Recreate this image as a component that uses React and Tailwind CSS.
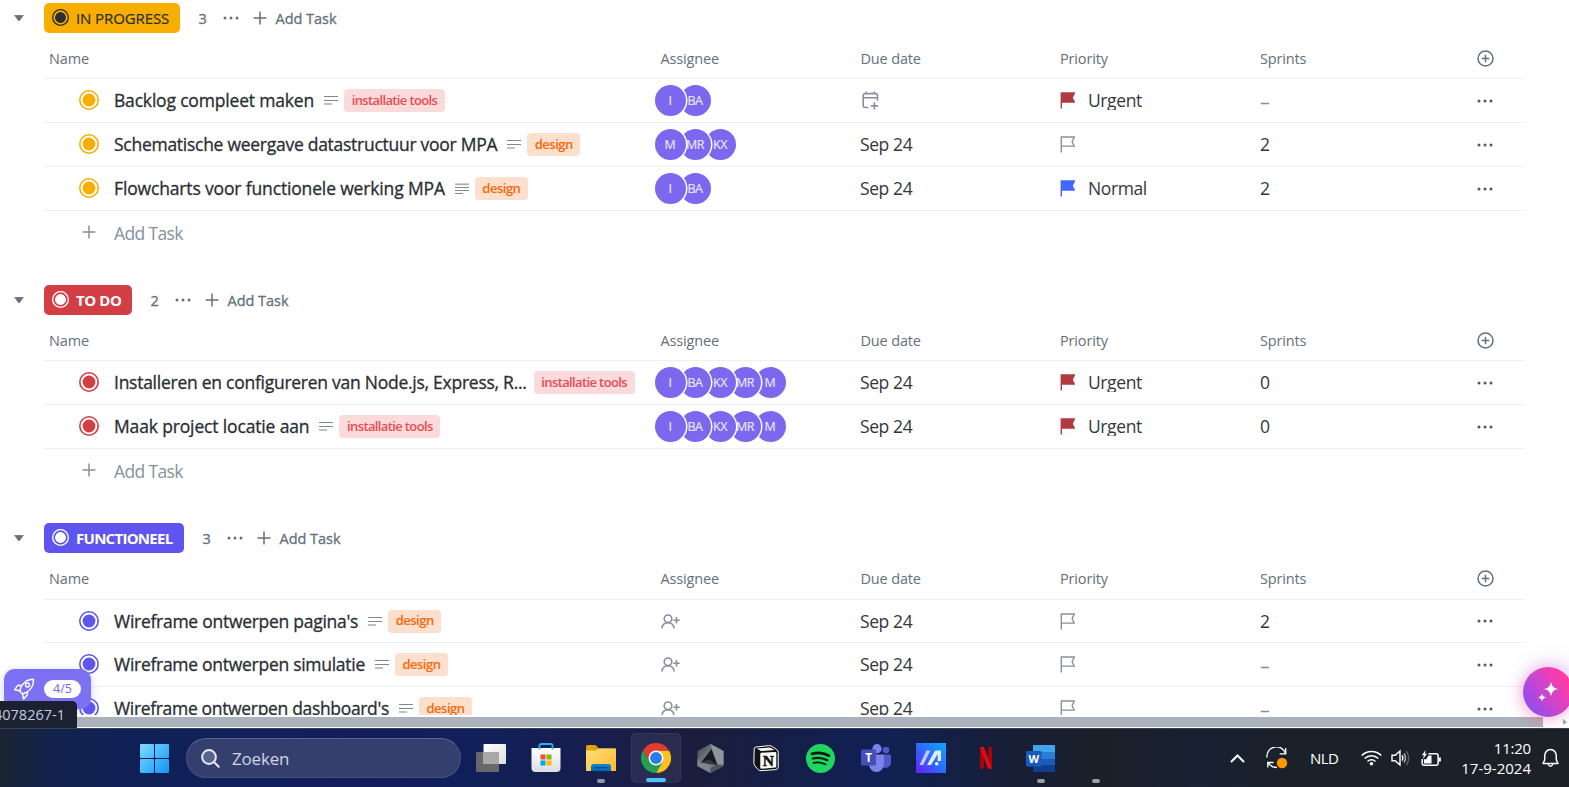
import React from "react";

const AMBER = "#f8ae00";
const RED = "#d33d44";
const INDIGO = "#5f55ee";

const sections = [
  {
    title: "IN PROGRESS", count: 3, color: AMBER, badge: "bg-[#f8ae00] text-[#2a2e34] w-[136px]", mark: "#2a2e34",
    titleClass: "font-normal tracking-[-0.1px] [-webkit-text-stroke:0.2px]", headClass: "h-[41px]", addRow: true,
    tasks: [
      { name: "Backlog compleet maken", track: "tracking-[-0.18px]", tag: "tools", people: ["I", "BA"], due: null, prio: "Urgent", sprint: "–" },
      { name: "Schematische weergave datastructuur voor MPA", track: "tracking-[-0.27px]", tag: "design", people: ["M", "MR", "KX"], due: "Sep 24", prio: null, sprint: "2" },
      { name: "Flowcharts voor functionele werking MPA", track: "tracking-[-0.15px]", tag: "design", dense: true, people: ["I", "BA"], due: "Sep 24", prio: "Normal", sprint: "2" },
    ],
  },
  {
    title: "TO DO", count: 2, color: RED, badge: "bg-[#d33d44] text-white w-[88px]", mark: "#fff",
    titleClass: "font-bold tracking-[-0.4px]", headClass: "h-[41px]", addRow: true,
    tasks: [
      { name: "Installeren en configureren van Node.js, Express, R...", track: "tracking-[-0.26px]", noDesc: true, tag: "tools", people: ["I", "BA", "KX", "MR", "M"], due: "Sep 24", prio: "Urgent", sprint: "0" },
      { name: "Maak project locatie aan", track: "tracking-[-0.15px]", tag: "tools", people: ["I", "BA", "KX", "MR", "M"], due: "Sep 24", prio: "Urgent", sprint: "0" },
    ],
  },
  {
    title: "FUNCTIONEEL", count: 3, color: INDIGO, badge: "bg-[#5f55ee] text-white w-[140px]", mark: "#fff",
    titleClass: "font-bold tracking-[-0.72px]", headClass: "h-[42px] pb-px", addRow: false,
    tasks: [
      { name: "Wireframe ontwerpen pagina's", track: "tracking-[-0.27px]", tag: "design", people: [], due: "Sep 24", prio: null, sprint: "2", short: true },
      { name: "Wireframe ontwerpen simulatie", track: "tracking-[-0.28px]", tag: "design", people: [], due: "Sep 24", prio: null, sprint: "–" },
      { name: "Wireframe ontwerpen dashboard's", track: "tracking-[-0.33px]", tag: "design", people: [], due: "Sep 24", prio: null, sprint: "–" },
    ],
  },
];

function Target({ color, size = 20, gap = "#fff" }) {
  return (
    <svg width={size} height={size} viewBox="0 0 20 20" className="-mt-px shrink-0">
      <circle cx="10" cy="10" r="9.2" fill={gap} stroke={color} strokeWidth="1.6" />
      <circle cx="10" cy="10" r="6.4" fill={color} />
    </svg>
  );
}

function Plus({ className, size = 14 }) {
  return (
    <svg width={size} height={size} viewBox="0 0 14 14" className={className} stroke="currentColor" strokeWidth="1.5" fill="none">
      <path d="M7 .5v13M.5 7h13" />
    </svg>
  );
}

function Dots({ className }) {
  return (
    <svg width="16" height="4" viewBox="0 0 16 4" className={className} fill="currentColor">
      <circle cx="2" cy="2" r="1.5" /><circle cx="8" cy="2" r="1.5" /><circle cx="14" cy="2" r="1.5" />
    </svg>
  );
}

function DescIcon({ dense }) {
  return (
    <svg width="14" height="11" viewBox="0 0 14 11" className="shrink-0" fill="none" stroke="#7f8795">
      {dense ? (
        <>
          <path d="M0 4.500h14M0 7.500h14M0 10.500h8" />
          <path d="M0 1.300h14" strokeWidth="1.800" stroke="#a9afba" />
        </>
      ) : (
        <>
          <path d="M0 1.500h14M0 5.500h14" />
          <path d="M0 9h8" strokeWidth="1.800" stroke="#b4b9c3" />
        </>
      )}
    </svg>
  );
}

function Flag({ kind }) {
  const fill = kind === "Urgent" ? "#b13a41" : kind === "Normal" ? "#4466ff" : "none";
  const stroke = kind ? fill : "#87909e";
  return (
    <svg width="15" height="17" viewBox="0 0 15 17" className="shrink-0" fill={fill} stroke={stroke} strokeWidth="1.4">
      <path d="M1.300 16.500V1h13L12.100 5.700l2.200 4.400H1.300" />
    </svg>
  );
}

function CalendarPlus() {
  return (
    <svg width="17" height="19" viewBox="0 0 17 19" className="ml-[2px]" fill="none" stroke="#87909e" strokeWidth="1.600">
      <path d="M4.2 .5v3M12.300 .5v3M1.200 6.700h14.300M6.500 16.500H3.200a2 2 0 0 1-2-2V4.600a2 2 0 0 1 2-2h10.300a2 2 0 0 1 2 2v5.200M12.400 11.300v7.200M8.800 14.900h7.200" />
    </svg>
  );
}

function UserPlus() {
  return (
    <svg width="19" height="15" viewBox="0 0 19 15" className="ml-[1px]" fill="none" stroke="#87909e" strokeWidth="1.600">
      <circle cx="7" cy="4.8" r="3.8" />
      <path d="M1 14.500c.2-3.600 2.600-5.800 6-5.800s5.800 2.200 6 5.800M15.500 3v6.400M12.300 6.200h6.400" />
    </svg>
  );
}

function Avatars({ people }) {
  if (!people.length) return <div className="pl-[5px]"><UserPlus /></div>;
  return (
    <div className="isolate flex">
      {people.map((p, i) => (
        <div
          key={i}
          style={{ zIndex: 10 - i }}
          className="relative -mr-[6px] flex h-[31px] w-[31px] shrink-0 items-center justify-center rounded-full bg-[#7b68ee] pr-[1px] pt-px text-[12.5px] tracking-[-0.4px] text-[#e8e4ff] ring-[1.5px] ring-white [-webkit-text-stroke:0.2px]"
        >
          {p}
        </div>
      ))}
    </div>
  );
}

function Tag({ kind }) {
  return kind === "tools" ? (
    <span className="flex h-[23px] w-[101px] shrink-0 items-center justify-center rounded-[4px] bg-[#fbdadb] text-[13px] font-semibold tracking-[-0.63px] text-[#ea4b52]">installatie tools</span>
  ) : (
    <span className="flex h-[23px] w-[53px] shrink-0 items-center justify-center rounded-[4px] bg-[#fddfcd] text-[13px] font-semibold tracking-[-0.500px] text-[#f76808]">design</span>
  );
}

const grid = "grid grid-cols-[611px_200px_200px_200px_200px_1fr] items-center border-b border-[#eeeff1]";

function TaskRow({ task, color }) {
  return (
    <div className={`${grid} ${task.short ? "h-[43px]" : "h-[44px]"} text-[17.5px] tracking-[-0.4px] text-[#33373d]`}>
      <div className="flex items-center pl-[35px]">
        <Target color={color} />
        <span className={`ml-[15px] whitespace-nowrap text-[17.5px] text-[#2a2e34] [-webkit-text-stroke:0.3px] ${task.track}`}>{task.name}</span>
        <div className={`flex items-center gap-[6px] ${task.noDesc ? "ml-[7px]" : "ml-[10px]"}`}>
          {!task.noDesc && <DescIcon dense={task.dense} />}
          <Tag kind={task.tag} />
        </div>
      </div>
      <Avatars people={task.people} />
      <div className="pl-[5px]">{task.due || <CalendarPlus />}</div>
      <div className="flex h-[25px] items-start gap-[13px] pl-[5px]">
        <div className="pt-[4px]"><Flag kind={task.prio} /></div>
        {task.prio && <span className="h-[22px] overflow-hidden leading-[25px]">{task.prio}</span>}
      </div>
      <div className="pl-[5px]">
        {task.sprint === "–" ? <span className="block pt-[2px] text-[19.500px] leading-[24px] text-[#87909e]">–</span> : task.sprint}
      </div>
      <Dots className="ml-[22px] text-[#4f5762]" />
    </div>
  );
}

function Section({ s }) {
  return (
    <section className="flex flex-col">
      <div className="flex h-[30px] items-center">
        <svg width="10" height="6" viewBox="0 0 10 6" className="ml-[14px] mr-[20px]"><path d="M.6.300h8.800L5.700 5.400a1 1 0 0 1-1.400 0z" fill="#656f7d" stroke="#656f7d" strokeWidth=".6" /></svg>
        <div className={`flex h-[30px] items-center gap-[7.500px] rounded-[5px] pl-[7.5px] ${s.badge}`}>
          <Target color={s.mark} size={17} gap={s.color} />
          <span className={`whitespace-nowrap pt-px text-[15px] ${s.titleClass}`}>{s.title}</span>
        </div>
        <div className="flex items-center text-[14.5px] text-[#656f7d] [-webkit-text-stroke:0.3px]">
          <span className="ml-[18.500px] w-[9px] pt-[2px]">{s.count}</span>
          <Dots className="ml-[15.500px]" />
          <Plus className="ml-[14px]" />
          <span className="ml-[8.500px] pt-[2px] tracking-[-0.02px]">Add Task</span>
        </div>
      </div>
      <div className="ml-[44px] w-[1481px]">
        <div className={`${grid} ${s.headClass} mt-[5px] text-[14.5px] tracking-[-0.15px] text-[#656f7d]`}>
          <span className="pl-[5px] pt-[2px]">Name</span>
          <span className="pl-[5.500px] pt-[2px]">Assignee</span>
          <span className="pl-[5.500px] pt-[2px]">Due date</span>
          <span className="pl-[5px] pt-[2px]">Priority</span>
          <span className="pl-[5px] pt-[2px]">Sprints</span>
          <svg width="17" height="17" viewBox="0 0 17 17" className="ml-[21.500px]" fill="none" stroke="#656f7d" strokeWidth="1.5"><circle cx="8.500" cy="8.500" r="7.500" /><path d="M8.500 4.700v7.600M4.700 8.500h7.600" /></svg>
        </div>
        {s.tasks.map((t) => <TaskRow key={t.name} task={t} color={s.color} />)}
      </div>
      {s.addRow && (
        <div className="flex h-[74px] items-start pl-[82px] pt-[9px] text-[#87909e]">
          <Plus className="mt-[5px]" />
          <span className="ml-[18px] text-[17.5px] leading-[26px] tracking-[-0.65px]">Add Task</span>
        </div>
      )}
    </section>
  );
}

/* ---------- taskbar icons ---------- */

const WinLogo = () => (
  <svg width="29" height="29" viewBox="0 0 29 29">
    <defs><linearGradient id="win" gradientUnits="userSpaceOnUse" x1="0" y1="0" x2="29" y2="29"><stop stopColor="#7fdcfb" /><stop offset="1" stopColor="#0f95fb" /></linearGradient></defs>
    <g fill="url(#win)"><rect width="14" height="14" rx="1" /><rect x="15" width="14" height="14" rx="1" /><rect y="15" width="14" height="14" rx="1" /><rect x="15" y="15" width="14" height="14" rx="1" /></g>
  </svg>
);

const TaskView = () => (
  <svg width="30" height="28" viewBox="0 0 30 28">
    <defs><linearGradient id="tv" x1="0" y1="0" x2="1" y2="1"><stop stopColor="#fff" /><stop offset="1" stopColor="#dedede" /></linearGradient></defs>
    <rect y="8" width="23" height="20" rx="1" fill="#686868" />
    <rect x="7.500" width="22.500" height="20" rx="1" fill="url(#tv)" />
    <path d="M7.500 8H23v12H7.500z" fill="#a9a9a9" />
  </svg>
);

const Store = () => (
  <svg width="30" height="30" viewBox="0 0 30 30">
    <defs><linearGradient id="st" x1="0" y1="0" x2="0" y2="1"><stop stopColor="#fff" /><stop offset="1" stopColor="#dcdde2" /></linearGradient></defs>
    <path d="M.5 5h29v20a4 4 0 0 1-4 4h-21a4 4 0 0 1-4-4z" fill="url(#st)" />
    <path d="M8.500 6.500V2.500a1.500 1.500 0 0 1 1.500-1.500h10a1.500 1.500 0 0 1 1.500 1.500v4" fill="none" stroke="#2bb1ef" strokeWidth="1.800" />
    <path d="M9.500 11.500H14.500V16.500H9.500z" fill="#f25022" /><path d="M15.500 11.500H20.500V16.500H15.500z" fill="#7fba00" />
    <path d="M9.500 17.500H14.500V22.500H9.500z" fill="#00a4ef" /><path d="M15.500 17.500H20.500V22.500H15.500z" fill="#ffb900" />
  </svg>
);

const Folder = () => (
  <svg width="30" height="27" viewBox="0 0 30 27">
    <defs>
      <linearGradient id="fo" x1="0" y1="0" x2="1" y2="1"><stop stopColor="#ffdf7d" /><stop offset="1" stopColor="#fbbc2a" /></linearGradient>
      <linearGradient id="fb" x1="0" y1="0" x2="0" y2="1"><stop stopColor="#0f87d8" /><stop offset="1" stopColor="#0a62b4" /></linearGradient>
    </defs>
    <path d="M0 1.500A1.500 1.500 0 0 1 1.500 0h8L13 3.500H28.500A1.500 1.500 0 0 1 30 5v5H0z" fill="#dfa000" />
    <path d="M0 5.500h10L13 3.500h17V26H0z" fill="url(#fo)" />
    <path d="M5 26v-4.500A2.500 2.500 0 0 1 7.500 19h15A2.500 2.500 0 0 1 25 21.500V26z" fill="url(#fb)" />
    <path d="M8.500 22.600h13" stroke="#064a8c" strokeWidth="1.200" />
  </svg>
);

const Chrome = () => (
  <svg width="30" height="30" viewBox="0 0 48 48">
    <path d="M24 12h20.800A24 24 0 0 1 24 48L34.400 30z" fill="#fcc31e" />
    <path d="M13.600 30 3.200 12A24 24 0 0 0 24 48l10.400-18z" fill="#23a050" />
    <path d="M24 12H44.800A24 24 0 0 0 3.200 12l10.400 18z" fill="#e33b2e" />
    <circle cx="24" cy="24" r="12" fill="#fff" /><circle cx="24" cy="24" r="9.500" fill="#2a7de9" />
  </svg>
);

const Armoury = () => (
  <svg width="27" height="29" viewBox="0 0 27 29">
    <defs><linearGradient id="ar" x1="0" y1="0" x2="1" y2="1"><stop stopColor="#3c444b" /><stop offset=".5" stopColor="#7f888e" /><stop offset="1" stopColor="#5b646b" /></linearGradient></defs>
    <path d="M13.500 0 26.500 7v15l-13 7L.5 22V7z" fill="url(#ar)" />
    <path d="M13.500 0 26.500 7v14l-5.500-1-6-15z" fill="#8d969c" />
    <path d="M.5 15v7l13 7V24L5 20z" fill="#7d868d" />
    <path d="M13.500 29l13-7-6-1.500-7 3.500z" fill="#4b535a" />
    <path d="M14.500 5 4 18.500l8-2.500 8.500 5.500z" fill="#161a21" />
    <path d="M4 18.500 12 16l8.500 5.500z" fill="#30373e" />
  </svg>
);

const Notion = () => (
  <svg width="26" height="27" viewBox="0 0 26 27">
    <path d="M1.200 4Q1 2.300 3 2L15.500.7Q18 .500 19.500 1.700L24 4.800q1.200 1 1.200 2.500v14.500q0 2.500-2.500 2.800L8 25.700q-2 0-3-1.200L1.800 20.700Q.9 19.500.9 17.500z" fill="#111" stroke="#fff" strokeWidth="1" />
    <path d="M3.800 3.600 16.300 2.500q1-.1 1.800.5L21.300 5 8 6.100z" fill="#fff" />
    <path d="M7.300 9q0-1.200 1.200-1.300L22 6.900q1.300 0 1.300 1.300v13q0 1.300-1.200 1.400L8.700 23.700q-1.400 0-1.400-1.300z" fill="#fff" />
    <text x="15.400" y="20.500" textAnchor="middle" fontFamily="Liberation Serif, serif" fontWeight="700" fontSize="15.500" fill="#111" stroke="#111" strokeWidth=".5">N</text>
  </svg>
);

const Spotify = () => (
  <svg width="29" height="29" viewBox="0 0 29 29">
    <circle cx="14.500" cy="14.500" r="14.500" fill="#1ed760" />
    <g fill="none" stroke="#0c1a12" strokeLinecap="round"><path d="M6 9.900c5.500-1.500 12-1 17 1.800" strokeWidth="2.700" /><path d="M6.800 14.500c5-1.300 10-.7 14.500 1.700" strokeWidth="2.200" /><path d="M7.500 18.800c4-.9 8-.5 12 1.600" strokeWidth="1.800" /></g>
  </svg>
);

const Teams = () => (
  <svg width="30" height="28" viewBox="0 0 30 28">
    <circle cx="25" cy="6" r="3.300" fill="#5059c9" /><path d="M20 10.500h8.500A1.500 1.500 0 0 1 30 12v6.500a5.500 5.500 0 0 1-8 4.800z" fill="#5059c9" />
    <circle cx="16" cy="4.700" r="4.600" fill="#7b83eb" /><path d="M9 10.500h12.500A1.500 1.500 0 0 1 23 12v8.500a7.500 7.500 0 0 1-15 0z" fill="#7b83eb" />
    <rect y="5.500" width="15" height="16" rx="1.300" fill="#464eb8" />
    <text x="7.500" y="17.600" textAnchor="middle" fontFamily="Open Sans, sans-serif" fontWeight="700" fontSize="11.500" fill="#fff">T</text>
  </svg>
);

const MyAsus = () => (
  <svg width="30" height="30" viewBox="0 0 30 30">
    <defs><linearGradient id="ma" x1="0" y1="1" x2="1" y2="0"><stop stopColor="#6a1cff" /><stop offset=".5" stopColor="#2c6bff" /><stop offset="1" stopColor="#0fa8ff" /></linearGradient></defs>
    <rect width="30" height="30" fill="url(#ma)" />
    <path d="M3.500 22 10.500 7.500h3.800L7.200 22z" fill="#bccbff" />
    <path d="M11 22 18.500 8.500Q19.200 7.500 20.500 7.500H25V18h-3.300V11L15 22z" fill="#e4ebff" />
    <circle cx="20.700" cy="20.700" r="1.700" fill="#fff" />
  </svg>
);

const Netflix = () => (
  <svg width="12" height="22" viewBox="0 0 12 22">
    <path d="M0 0h4v21.500L0 22z" fill="#a5060e" /><path d="M8 0h4v22l-4-.5z" fill="#a5060e" /><path d="M0 0h4l8 22-4.200-.5z" fill="#e50914" />
  </svg>
);

const Word = () => (
  <svg width="29" height="27" viewBox="0 0 29 27" className="mr-[1px]">
    <path d="M7 0h21a1 1 0 0 1 1 1v6H7z" fill="#41a5ee" /><path d="M7 7h22v7H7z" fill="#2b7cd3" /><path d="M7 14h22v6.500H7z" fill="#185abd" /><path d="M7 20.500h22V26a1 1 0 0 1-1 1H8a1 1 0 0 1-1-1z" fill="#103f91" />
    <rect y="6" width="15.500" height="15.500" rx="1.300" fill="#185abd" />
    <text x="7.700" y="17.800" textAnchor="middle" fontFamily="Open Sans, sans-serif" fontWeight="700" fontSize="11" fill="#fff">W</text>
  </svg>
);

const apps = [
  { Icon: TaskView }, { Icon: Store }, { Icon: Folder, mark: "bg-[#8f96ad] w-[8px]" },
  { Icon: Chrome, mark: "bg-[#4cc2ff] w-[20px]", active: true }, { Icon: Armoury }, { Icon: Notion }, { Icon: Spotify },
  { Icon: Teams }, { Icon: MyAsus }, { Icon: Netflix }, { Icon: Word, mark: "bg-[#9a9da6] w-[8px]" },
  { mark: "bg-[#9a9da6] w-[8px]" },
];

function Taskbar() {
  return (
    <footer className="flex h-[59px] items-center border-t border-[#3a4157] bg-[linear-gradient(90deg,#1a2433_0px,#12224c_50px,#0f2056_130px,#11205c_260px,#141c5e_330px,#10205a_480px,#191d4a_620px,#1b1d3c_700px,#111f52_850px,#102152_900px,#171e38_1000px,#1b1f29_1100px,#182132_1200px,#1b2129_1300px,#1c2128_1569px)] text-white">
      <div className="ml-[140px]"><WinLogo /></div>
      <div className="ml-[17px] flex h-[40px] w-[275px] items-center rounded-full border border-white/10 border-t-white/20 bg-[#343f6d] pl-[14px]">
        <svg width="19" height="19" viewBox="0 0 19 19" fill="none" stroke="#e8eaf3" strokeWidth="2" strokeLinecap="round"><circle cx="8" cy="8" r="6.900" fill="#59638c" /><path d="m13.200 13.200 4.500 4.500" /></svg>
        <span className="ml-[12px] pt-[2px] text-[17px] tracking-[-0.2px] text-[#d0d4e4]">Zoeken</span>
      </div>
      <div className="ml-[2px] flex">
        {apps.map(({ Icon, mark, active }, i) => (
          <div key={i} className="flex h-[58px] w-[55px] items-center justify-center">
            <div className={`relative flex h-[50px] w-[50px] items-center justify-center rounded-[5px] ${active ? "border border-white/5 bg-white/7" : ""}`}>
              {Icon && <Icon />}
              {mark && <span className={`absolute bottom-0 h-[4px] rounded-full ${mark}`} />}
            </div>
          </div>
        ))}
      </div>
      <div className="ml-auto flex items-center">
        <svg width="15" height="9" viewBox="0 0 15 9" fill="none" stroke="#fff" strokeWidth="2" className="mr-[21px]"><path d="m1 8 6.500-6.500L14 8" /></svg>
        <svg width="22" height="22" viewBox="0 0 22 22" fill="none" stroke="#fff" strokeWidth="1.300" className="mr-[22.500px]">
          <path d="M1 10.500A9.500 9.500 0 0 1 19.500 6.500M19.700 1v5.800h-6M7.500 15.500H1.800v5M2 15.700Q5 20.500 11 20.500" />
          <circle cx="16" cy="16" r="5.200" fill="#ff9800" stroke="none" />
        </svg>
        <span className="mr-[22px] w-[29px] pt-px text-[15px] tracking-[-0.5px]">NLD</span>
        <svg width="21" height="16" viewBox="0 0 21 16" fill="none" stroke="#fff" strokeWidth="1.400" className="mr-[9px]">
          <path d="M.7 5.500a14 14 0 0 1 19.600 0M3.600 8.500a10 10 0 0 1 13.800 0M6.500 11.400a5.800 5.800 0 0 1 8 0" /><circle cx="10.500" cy="13.700" r="1.800" fill="#fff" stroke="none" />
        </svg>
        <svg width="21" height="18" viewBox="0 0 21 18" fill="none" stroke="#fff" strokeWidth="1.400" className="mr-[9px]">
          <path d="M1 6.200h3.200L9 2v14L4.200 11.800H1zM11 6.500q1.700 2.500 0 5" /><path d="M13 4.500q3 4.500 0 9" stroke="#b5b8bd" /><path d="M15.300 2q4.800 7 0 14" stroke="#5b6068" />
        </svg>
        <svg width="20" height="17" viewBox="0 0 20 17" fill="none" stroke="#fff" strokeWidth="1.500" className="mr-[19px]">
          <path d="M7.500 3.700h7.800a1.800 1.800 0 0 1 1.800 1.800v8a1.800 1.800 0 0 1-1.800 1.800H3a1.800 1.800 0 0 1-1.800-1.800V9" /><path d="M18.800 7.500v4" strokeWidth="2.200" />
          <path d="M7.500 5.500H10.500v8H3V9l2 .5z" fill="#fff" stroke="none" /><path d="M4.500 0 1 5.200h2L1.800 9.200 6 3.800H4z" fill="#fff" stroke="none" />
        </svg>
        <div className="w-[71px] whitespace-nowrap text-right text-[15px] leading-[20px]">
          <div className="tracking-[-0.2px]">11:20</div><div className="tracking-[0px]">17-9-2024</div>
        </div>
        <svg width="17" height="20" viewBox="0 0 17 20" fill="none" stroke="#fff" strokeWidth="1.500" className="ml-[11px] mr-[10px]">
          <path d="M2.700 8A5.800 6.600 0 0 1 14.300 8v4l1.700 3.500H1L2.700 12z" strokeLinejoin="round" /><path d="M6 16q2.500 4.500 5 0" />
        </svg>
      </div>
    </footer>
  );
}

export default function App() {
  return (
    <div className="relative flex h-[787px] w-[1569px] flex-col overflow-hidden bg-white font-['Open_Sans','Noto_Sans',sans-serif]">
      <main className="h-[715px] overflow-hidden pt-[3px]">
        {sections.map((s) => <Section key={s.title} s={s} />)}
      </main>
      <div className="flex h-[13px] items-start pt-[2px]">
        <div className="h-[10px] w-[1543px] bg-[#abb2bc]" />
        <svg width="4" height="6" viewBox="0 0 4 6" className="ml-[20px] mt-[2px]"><path d="M0 0v6l4-3z" fill="#a0a6b0" /></svg>
      </div>
      <Taskbar />

      <div className="absolute left-[4px] top-[669px] flex h-[40px] w-[87px] items-start rounded-[11px] bg-[#7c70f3] pl-[9px] pt-[9px] shadow-[0_2px_10px_rgba(124,112,243,0.35)]">
        <svg width="22" height="22" viewBox="0 0 22 22" fill="none" stroke="#fff" strokeWidth="1.400" strokeLinejoin="round">
          <path d="M7 13.500C7.500 7 12.500 1.500 20.500 1.200c.3 7.800-4.500 13-11 14.800zM8.500 7.500 5 7.200 1.500 11.800l5.300 1M14.500 13.800l-.3 3.200-3.700 4-1-4.800" />
          <circle cx="14.500" cy="7" r="2" />
        </svg>
        <span className="ml-[9px] mt-[2px] flex h-[18px] w-[37px] items-center justify-center rounded-full bg-white text-[12.500px] text-[#7467ef]">4/5</span>
      </div>
      <div className="absolute left-0 top-[701px] flex h-[27px] w-[77px] items-center justify-end overflow-hidden whitespace-nowrap rounded-tr-[5px] bg-[#1a2130] pr-[12px] text-[14.500px] tracking-[0px] text-[#c5cbe0]">4078267-1</div>

      <div className="absolute left-[1523px] top-[667px] flex h-[50px] w-[50px] items-center rounded-full bg-[linear-gradient(55deg,#8050f5_5%,#c845d0_45%,#ff3ba5_80%)] pl-[15px] shadow-[-3px_3px_14px_rgba(255,60,120,0.3),3px_-5px_20px_rgba(150,80,245,0.25)]">
        <svg width="20" height="20" viewBox="0 0 20 20" fill="#fff">
          <path d="M13 0q1 6 7 7-6 1-7 7-1-6-7-7 6-1 7-7zM4 11.500q.6 3.400 4 4-3.400.6-4 4-.6-3.400-4-4 3.400-.6 4-4z" />
        </svg>
      </div>
    </div>
  );
}
